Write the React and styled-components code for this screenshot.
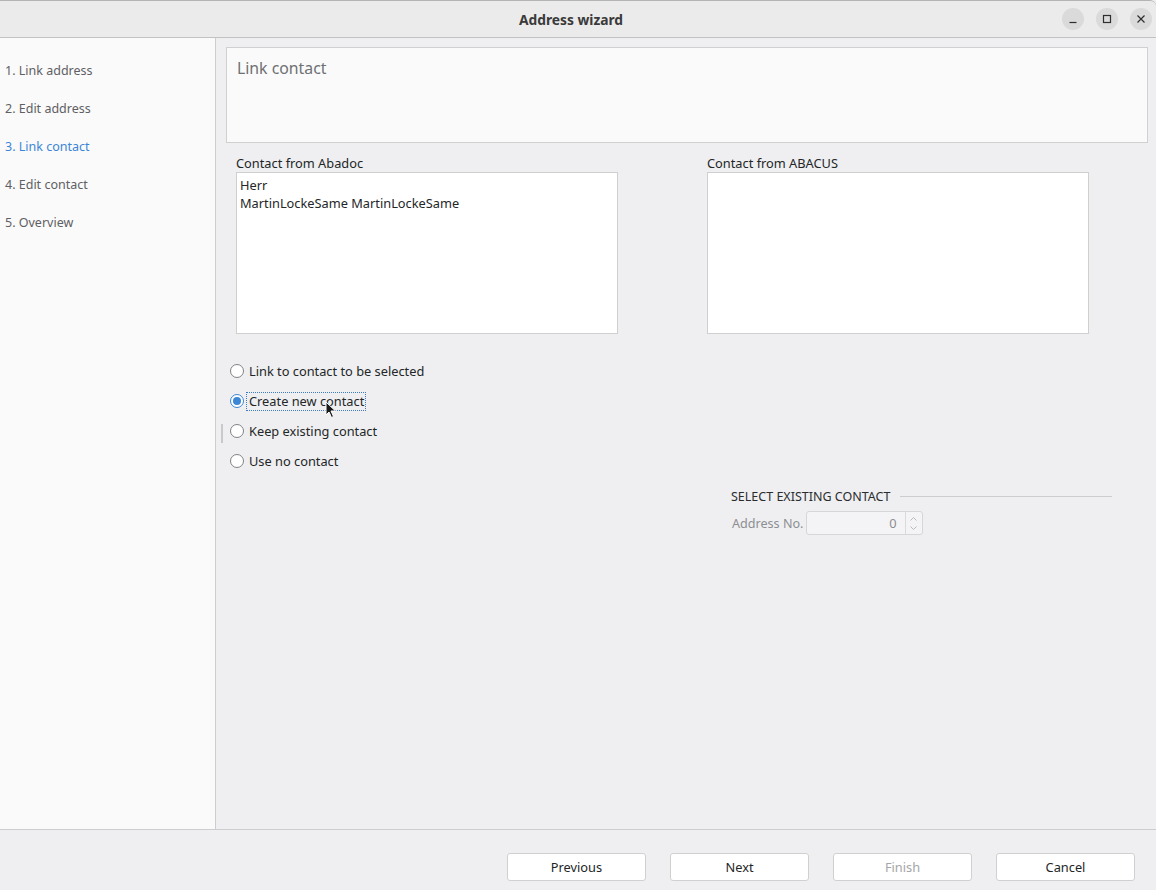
import React from "react";
import styled, { createGlobalStyle, css } from "styled-components";

const Global = createGlobalStyle`
  html, body { margin: 0; padding: 0; }
  body {
    font-family: "Noto Sans", "Open Sans", "DejaVu Sans", sans-serif;
    font-size: 12.8px;
    color: #232627;
    background: #efeff1;
  }
  * { box-sizing: border-box; }
`;

const Window = styled.div`
  width: 1156px;
  height: 890px;
  display: flex;
  flex-direction: column;
  background: #efeff1;
  overflow: hidden;
  position: relative;
`;

const TitleBar = styled.div`
  height: 38px;
  flex: none;
  background: #ebebeb;
  border-top: 1px solid #b4b4b4;
  border-bottom: 1px solid #c2c2c2;
  border-top-right-radius: 6px;
  display: grid;
  grid-template-columns: 1fr auto 1fr;
  align-items: center;
`;

const Title = styled.div`
  grid-column: 2;
  font-weight: 700;
  font-size: 13.8px;
  color: #3a3a3a;
  padding-right: 14px;
`;

const WinControls = styled.div`
  grid-column: 3;
  justify-self: end;
  display: flex;
  gap: 12px;
  padding-right: 4px;
`;

const WinBtn = styled.div`
  width: 22px;
  height: 22px;
  border-radius: 50%;
  background: #dadada;
  display: flex;
  align-items: center;
  justify-content: center;
  color: #2e2e2e;
`;

const Main = styled.div`
  flex: 1;
  display: flex;
  min-height: 0;
`;

const Sidebar = styled.div`
  width: 216px;
  flex: none;
  background: #fafafa;
  border-right: 1px solid #cdcdcd;
  padding-top: 23px;
  display: flex;
  flex-direction: column;
`;

const Step = styled.div`
  height: 38px;
  line-height: 20px;
  padding-left: 5px;
  font-size: 12.5px;
  color: ${(p) => (p.$active ? "#3b86d6" : "#5e6063")};
`;

const Content = styled.div`
  flex: 1;
  position: relative;
  padding: 9px 9px 0 10px;
  display: flex;
  flex-direction: column;
`;

const HeaderBox = styled.div`
  height: 96px;
  width: 922px;
  background: #fafafa;
  border: 1px solid #d0d0d0;
  padding: 9px 10px;
  font-size: 15.8px;
  color: #6e7073;
`;

const Columns = styled.div`
  display: flex;
  gap: 89px;
  padding-left: 10px;
  margin-top: 11px;
`;

const Column = styled.div`
  display: flex;
  flex-direction: column;
  width: 382px;
`;

const Label = styled.div`
  height: 18px;
  line-height: 19px;
  color: #232627;
`;

const ListBox = styled.div`
  height: 162px;
  background: #ffffff;
  border: 1px solid #cfcfcf;
  padding: 3px 3px;
  line-height: 18px;
  color: #232627;
`;

const RadioGroup = styled.div`
  margin-top: 22px;
  padding-left: 4px;
  display: flex;
  flex-direction: column;
`;

const RadioRow = styled.div`
  height: 30px;
  display: flex;
  align-items: center;
`;

const RadioDot = styled.span`
  width: 14px;
  height: 14px;
  border-radius: 50%;
  flex: none;
  background: #fff;
  border: 1px solid #7f8285;
  position: relative;
  ${(p) =>
    p.$checked &&
    css`
      border-color: #3b86d6;
      &::after {
        content: "";
        position: absolute;
        left: 2px;
        top: 2px;
        width: 8px;
        height: 8px;
        border-radius: 50%;
        background: #3b86d6;
      }
    `}
`;

const RadioText = styled.span`
  margin-left: 2px;
  padding: 0 1px 1px 2px;
  height: 19px;
  line-height: 17px;
  color: #232627;
  border: 1px dotted ${(p) => (p.$focused ? "#3b7bc4" : "transparent")};
`;

const Group = styled.div`
  margin-left: 505px;
  margin-top: 12px;
  width: 381px;
  display: flex;
  flex-direction: column;
`;

const GroupTitle = styled.div`
  display: flex;
  align-items: center;
  gap: 10px;
  font-size: 12.5px;
  color: #2a2c2e;
  height: 17px;
  &::after {
    content: "";
    flex: 1;
    height: 1px;
    background: #cdcdcd;
  }
`;

const FieldRow = styled.div`
  margin-top: 6px;
  display: flex;
  align-items: center;
  gap: 2px;
`;

const FieldLabel = styled.div`
  font-size: 12.6px;
  color: #8c8e91;
  padding-left: 1px;
`;

const SpinBox = styled.div`
  width: 117px;
  height: 24px;
  border: 1px solid #d6d6d8;
  border-radius: 3px;
  background: #f4f4f6;
  display: flex;
`;

const SpinValue = styled.div`
  flex: 1;
  text-align: right;
  padding-right: 8px;
  line-height: 22px;
  color: #8c8e91;
`;

const SpinArrows = styled.div`
  width: 17px;
  border-left: 1px solid #dadadc;
  display: flex;
  flex-direction: column;
  align-items: center;
  justify-content: center;
  gap: 5px;
  color: #b0b2b4;
`;

const Footer = styled.div`
  height: 61px;
  flex: none;
  border-top: 1px solid #cdcdcd;
  display: flex;
  justify-content: flex-end;
  gap: 24px;
  padding: 23px 21px 0 0;
`;

const Button = styled.div`
  width: 139px;
  height: 28px;
  border: 1px solid #d0d0d0;
  border-radius: 3px;
  background: #ffffff;
  display: flex;
  align-items: center;
  justify-content: center;
  color: ${(p) => (p.$disabled ? "#a4a6a8" : "#232627")};
`;

const Splitter = styled.div`
  position: absolute;
  left: 5px;
  top: 386px;
  width: 2px;
  height: 19px;
  background: #c9c9cb;
`;

const Cursor = styled.svg`
  position: absolute;
  left: 325px;
  top: 401px;
  pointer-events: none;
`;

const steps = [
  "1. Link address",
  "2. Edit address",
  "3. Link contact",
  "4. Edit contact",
  "5. Overview",
];

const radios = [
  "Link to contact to be selected",
  "Create new contact",
  "Keep existing contact",
  "Use no contact",
];

export default function App() {
  return (
    <>
      <Global />
      <Window>
        <TitleBar>
          <Title>Address wizard</Title>
          <WinControls>
            <WinBtn>
              <svg width="10" height="10" viewBox="0 0 10 10">
                <path d="M1.5 8.5h7" stroke="currentColor" strokeWidth="1.2" />
              </svg>
            </WinBtn>
            <WinBtn>
              <svg width="10" height="10" viewBox="0 0 10 10">
                <rect x="1.5" y="1.5" width="7" height="7" fill="none" stroke="currentColor" strokeWidth="1.2" />
              </svg>
            </WinBtn>
            <WinBtn>
              <svg width="10" height="10" viewBox="0 0 10 10">
                <path d="M1.5 1.5l7 7M8.5 1.5l-7 7" stroke="currentColor" strokeWidth="1.2" />
              </svg>
            </WinBtn>
          </WinControls>
        </TitleBar>
        <Main>
          <Sidebar>
            {steps.map((s, i) => (
              <Step key={s} $active={i === 2}>
                {s}
              </Step>
            ))}
          </Sidebar>
          <Content>
            <HeaderBox>Link contact</HeaderBox>
            <Columns>
              <Column>
                <Label>Contact from Abadoc</Label>
                <ListBox>
                  Herr
                  <br />
                  MartinLockeSame MartinLockeSame
                </ListBox>
              </Column>
              <Column>
                <Label>Contact from ABACUS</Label>
                <ListBox />
              </Column>
            </Columns>
            <RadioGroup>
              {radios.map((r, i) => (
                <RadioRow key={r}>
                  <RadioDot $checked={i === 1} />
                  <RadioText $focused={i === 1}>{r}</RadioText>
                </RadioRow>
              ))}
            </RadioGroup>
            <Group>
              <GroupTitle>SELECT EXISTING CONTACT</GroupTitle>
              <FieldRow>
                <FieldLabel>Address No.</FieldLabel>
                <SpinBox>
                  <SpinValue>0</SpinValue>
                  <SpinArrows>
                    <svg width="7" height="4" viewBox="0 0 7 4">
                      <path d="M0.5 3.5L3.5 0.5L6.5 3.5" fill="none" stroke="currentColor" strokeWidth="0.9" />
                    </svg>
                    <svg width="7" height="4" viewBox="0 0 7 4">
                      <path d="M0.5 0.5L3.5 3.5L6.5 0.5" fill="none" stroke="currentColor" strokeWidth="0.9" />
                    </svg>
                  </SpinArrows>
                </SpinBox>
              </FieldRow>
            </Group>
            <Splitter />
          </Content>
        </Main>
        <Footer>
          <Button>Previous</Button>
          <Button>Next</Button>
          <Button $disabled>Finish</Button>
          <Button>Cancel</Button>
        </Footer>
        <Cursor width="12" height="18" viewBox="0 0 12 18">
          <path
            d="M1 1 L1 14 L4 11 L6.5 16.5 L8.5 15.5 L6 10 L10.5 10 Z"
            fill="#1a1a1a"
            stroke="#ffffff"
            strokeWidth="1"
            strokeLinejoin="round"
          />
        </Cursor>
      </Window>
    </>
  );
}
